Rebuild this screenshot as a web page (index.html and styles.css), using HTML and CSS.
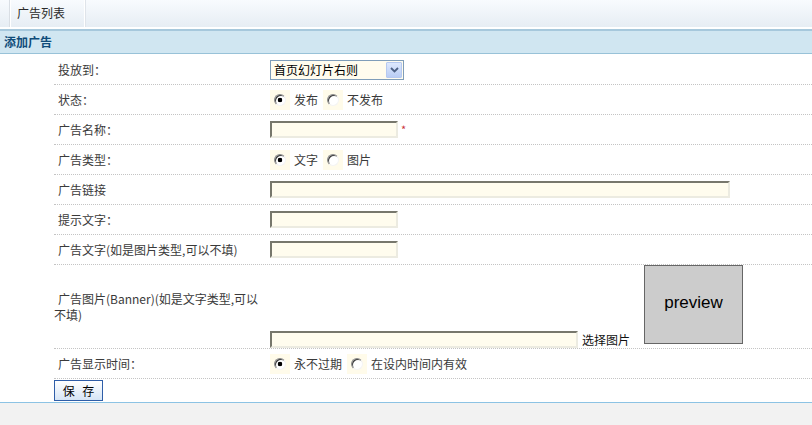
FILE: index.html
```html
<!DOCTYPE html>
<html lang="zh-CN">
<head>
    <meta charset="UTF-8">
    <title>添加广告</title>
    <link rel="stylesheet" href="styles.css">
</head>
<body>
    <div class="page">
        <div class="tab-bar">
            <ul class="tabs">
                <li class="tab">广告列表</li>
            </ul>
        </div>

        <div class="panel-head">添加广告</div>

        <form class="ad-form">
            <div class="form-row">
                <label class="form-label">投放到：</label>
                <div class="form-field">
                    <span class="select-box">
                        <select class="select">
                            <option>首页幻灯片右则</option>
                        </select>
                        <span class="select-btn">
                            <svg width="9" height="6" viewBox="0 0 9 6"><path d="M1 1 L4.5 4.5 L8 1" fill="none" stroke="#4d6185" stroke-width="1.8"/></svg>
                        </span>
                    </span>
                </div>
            </div>

            <div class="form-row">
                <label class="form-label">状态：</label>
                <div class="form-field">
                    <span class="radio-wrap"><input type="radio" name="status" class="radio" checked></span>
                    <span class="radio-text">发布</span>
                    <span class="radio-wrap"><input type="radio" name="status" class="radio"></span>
                    <span class="radio-text">不发布</span>
                </div>
            </div>

            <div class="form-row">
                <label class="form-label">广告名称：</label>
                <div class="form-field">
                    <input type="text" class="input">
                    <span class="required">*</span>
                </div>
            </div>

            <div class="form-row">
                <label class="form-label">广告类型：</label>
                <div class="form-field">
                    <span class="radio-wrap"><input type="radio" name="kind" class="radio" checked></span>
                    <span class="radio-text">文字</span>
                    <span class="radio-wrap"><input type="radio" name="kind" class="radio"></span>
                    <span class="radio-text">图片</span>
                </div>
            </div>

            <div class="form-row">
                <label class="form-label">广告链接</label>
                <div class="form-field">
                    <input type="text" class="input input-long">
                </div>
            </div>

            <div class="form-row">
                <label class="form-label">提示文字：</label>
                <div class="form-field">
                    <input type="text" class="input">
                </div>
            </div>

            <div class="form-row">
                <label class="form-label">广告文字(如是图片类型,可以不填)</label>
                <div class="form-field">
                    <input type="text" class="input">
                </div>
            </div>

            <div class="form-row form-row-tall">
                <label class="form-label">广告图片(Banner)(如是文字类型,可以不填)</label>
                <div class="form-field field-banner">
                    <input type="text" class="input input-file">
                    <span class="pick-text">选择图片</span>
                    <div class="preview">preview</div>
                </div>
            </div>

            <div class="form-row">
                <label class="form-label">广告显示时间：</label>
                <div class="form-field">
                    <span class="radio-wrap"><input type="radio" name="period" class="radio" checked></span>
                    <span class="radio-text">永不过期</span>
                    <span class="radio-wrap"><input type="radio" name="period" class="radio"></span>
                    <span class="radio-text">在设内时间内有效</span>
                </div>
            </div>

            <div class="form-actions">
                <button type="button" class="btn">保 存</button>
            </div>
        </form>
    </div>
</body>
</html>
```

FILE: styles.css
```css
* {
    margin: 0;
    padding: 0;
    box-sizing: border-box;
}

html {
    background: #f2f2f2;
}

body {
    font-family: "Noto Sans CJK SC", "Liberation Sans", sans-serif;
    font-size: 12px;
    color: #3a3a3a;
}

.page {
    background: #fff;
    border-bottom: 1px solid #8cc3e4;
    padding-bottom: 1px;
}

/* top tab strip */
.tab-bar {
    height: 31px;
    background: linear-gradient(to bottom, #f8fbfe 0%, #e5ecf3 100%);
    border-bottom: 2px solid #a6c8dc;
    box-shadow: inset 0 -2px 0 #fff;
}

.tabs {
    list-style: none;
    display: flex;
    padding-left: 9px;
}

.tab {
    height: 27px;
    line-height: 26px;
    padding: 0 19px 0 7px;
    border-left: 1px solid #d9dee4;
    border-right: 1px solid #fff;
    box-shadow: 1px 0 0 #dfe4ea, inset 1px 0 0 #fff;
    color: #2a2a2a;
}

.panel-head {
    height: 23px;
    line-height: 22px;
    padding-left: 4px;
    background: #d0e6f1;
    border-bottom: 1px solid #98c2d8;
    color: #0f4c79;
    font-weight: bold;
    margin-bottom: 1px;
}

/* form rows */
.ad-form {
    margin-left: 54px;
}

.form-row {
    display: grid;
    grid-template-columns: 216px 1fr;
    align-items: center;
    height: 30px;
    border-bottom: 1px dotted #c4c4c4;
}

.form-row-tall {
    height: 84px;
}

.form-label {
    text-indent: 4px;
    line-height: 16px;
    padding-right: 8px;
}

.form-field {
    display: flex;
    align-items: center;
}

.select-box {
    position: relative;
    display: inline-block;
    width: 134px;
    height: 20px;
    border: 1px solid #7f9db9;
    background: #fffcee;
}

.select {
    appearance: none;
    -webkit-appearance: none;
    width: 100%;
    height: 18px;
    border: none;
    outline: none;
    background: transparent;
    font-family: inherit;
    font-size: 12px;
    color: #000;
    padding-left: 3px;
}

.select-btn {
    position: absolute;
    top: 1px;
    right: 1px;
    width: 16px;
    height: 16px;
    border: 1px solid #b6c9f0;
    border-radius: 1px;
    background: linear-gradient(to bottom, #dde8fd 0%, #b9cdf5 100%);
    display: flex;
    align-items: center;
    justify-content: center;
}

.radio-wrap {
    width: 20px;
    height: 20px;
    background: #fffbea;
    display: flex;
    align-items: center;
    justify-content: center;
}

.radio {
    appearance: none;
    -webkit-appearance: none;
    width: 12px;
    height: 12px;
    border-radius: 50%;
    border: 1px solid;
    border-color: #8a8a8a #f4f4f4 #f4f4f4 #8a8a8a;
    box-shadow: inset 1px 1px 0 #3c3c3c;
    background: #fff;
}

.radio:checked {
    background: radial-gradient(circle, #000 0 2px, #fff 2.6px);
}

.radio-text {
    margin: 0 5px 0 4px;
}

.input {
    width: 128px;
    height: 17px;
    border: 2px solid;
    border-color: #77776c #ecebe1 #ecebe1 #77776c;
    background: #fffcee;
    font-size: 12px;
    outline: none;
}

.input-long {
    width: 460px;
}

.input-file {
    width: 308px;
}

.required {
    color: #c9333b;
    margin-left: 3px;
    font-size: 11px;
    align-self: flex-start;
}

.field-banner {
    align-items: flex-end;
    align-self: stretch;
}

.pick-text {
    margin: 0 13px 0 4px;
    color: #111;
    line-height: 16px;
}

.preview {
    width: 99px;
    height: 79px;
    background: #cccccc;
    border: 1px solid #666;
    display: flex;
    align-items: center;
    justify-content: center;
    padding-bottom: 4px;
    font-family: "Liberation Sans", Arial, sans-serif;
    font-size: 17px;
    color: #000;
    align-self: flex-start;
    margin-left: 1px;
}

.form-actions {
    padding-top: 1px;
}

.btn {
    width: 49px;
    height: 21px;
    border: 1px solid #2f5ea8;
    background: linear-gradient(to bottom, #ffffff 0%, #d6e5f6 100%);
    font-family: inherit;
    font-size: 12px;
    word-spacing: 5px;
    color: #000;
    cursor: pointer;
}
```
